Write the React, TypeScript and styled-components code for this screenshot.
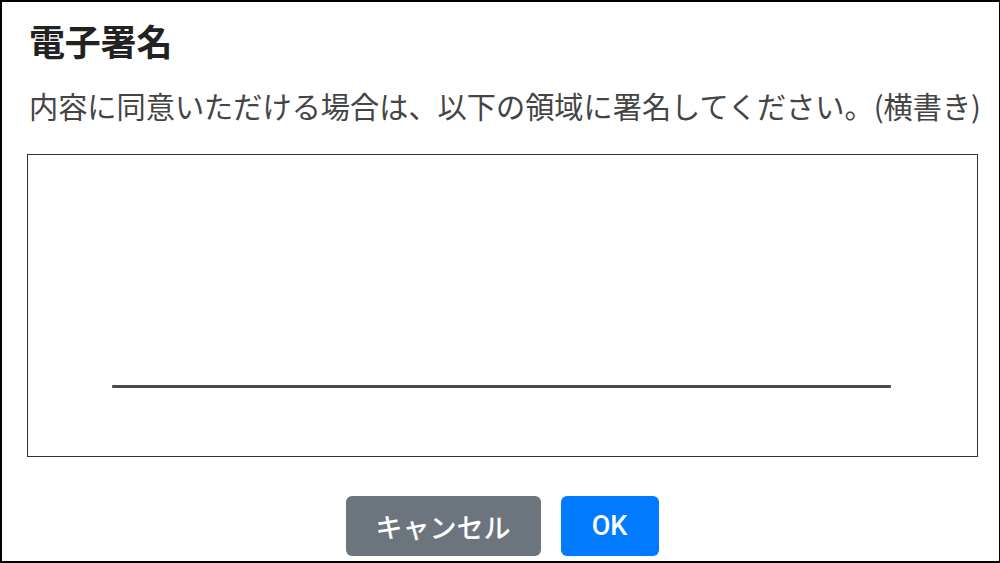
import React from "react";
import styled, { createGlobalStyle } from "styled-components";

const Global = createGlobalStyle`
  html, body { margin: 0; padding: 0; background: #fff; }
  body { font-family: "Noto Sans CJK JP", "Noto Sans", sans-serif; }
  * { box-sizing: border-box; }
`;

const Frame = styled.div`
  width: 1000px;
  height: 563px;
  border: 2px solid #000;
  border-right-width: 1px;
  background: #fff;
  overflow: hidden;
  display: flex;
  flex-direction: column;
  padding: 0 20px 0 25px;
`;

const Title = styled.h1`
  margin: 14px 0 0 2px;
  font-size: 36px;
  line-height: 48px;
  font-weight: 700;
  color: #222;
  letter-spacing: -0.2px;
`;

const Lead = styled.p`
  margin: 21px 0 0 2px;
  font-size: 29.2px;
  line-height: 40px;
  font-weight: 400;
  color: #444;
  white-space: nowrap;
`;

const Pad = styled.div`
  margin-top: 29px;
  width: 951px;
  height: 303px;
  border: 1.5px solid #333;
  display: flex;
  align-items: flex-end;
  justify-content: flex-start;
  padding: 0 0 68px 84px;
`;

const Baseline = styled.div`
  width: 779px;
  height: 3px;
  background: #4a4a4a;
  border-radius: 1px;
`;

const Actions = styled.div`
  margin-top: 39px;
  display: flex;
  justify-content: center;
  gap: 20px;
  padding-right: 2px;
`;

const Button = styled.button<{ $variant: "secondary" | "primary"; $w: number }>`
  width: ${(p) => p.$w}px;
  height: 60px;
  border: none;
  border-radius: 6px;
  background: ${(p) => (p.$variant === "primary" ? "#007bff" : "#6c757d")};
  color: #fff;
  font-family: Roboto, "Noto Sans CJK JP", sans-serif;
  font-size: 27px;
  font-weight: 500;
  display: flex;
  align-items: center;
  justify-content: center;
  padding: 0;
`;

export default function App() {
  return (
    <>
      <Global />
      <Frame>
        <Title>電子署名</Title>
        <Lead>内容に同意いただける場合は、以下の領域に署名してください。(横書き)</Lead>
        <Pad>
          <Baseline />
        </Pad>
        <Actions>
          <Button $variant="secondary" $w={195}>キャンセル</Button>
          <Button $variant="primary" $w={98}>OK</Button>
        </Actions>
      </Frame>
    </>
  );
}
